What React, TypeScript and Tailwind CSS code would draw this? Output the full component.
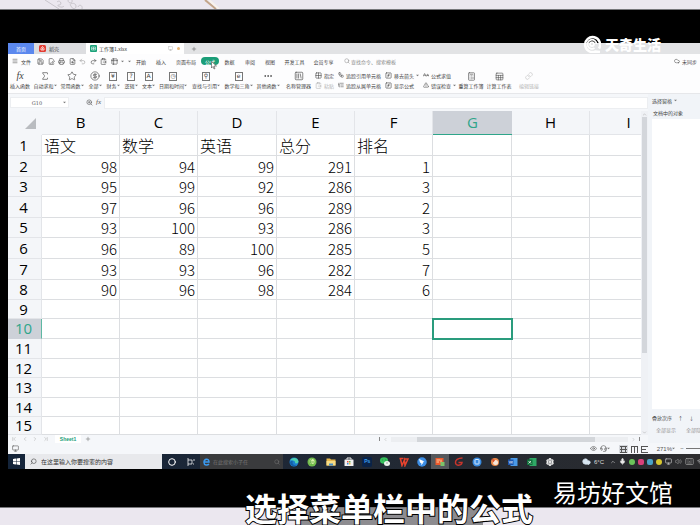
import React from 'react';
import {
  ALargeSmall, Calculator, ChevronDown, ChevronFirst, ChevronLast, ChevronLeft, ChevronRight, ChevronUp, Circle,
  CircleDollarSign, ClipboardPaste, Cloud, Ellipsis, Eye, FilePenLine, FileSearch, FunctionSquare, Grid2x2, Headset,
  Keyboard, Link, ListTree, Menu, Mic, Monitor, Plus, Printer, Redo2, Save, Search, Settings, Sheet, Sigma,
  SquareFunction, SquareLibrary, Star, Table2, TriangleAlert, Undo2, Volume2, Wifi, Workflow, ZoomIn,
} from 'lucide-react';

const columns = ['B', 'C', 'D', 'E', 'F', 'G', 'H', 'I'];
const columnWidths = [
  'min-w-[78px]', 'min-w-[78px]', 'min-w-[79px]', 'min-w-[78px]', 'min-w-[78px]', 'min-w-[79px]', 'min-w-[78px]', 'min-w-[78px]',
];

const rows: { h: string; cells?: (string | number)[] }[] = [
  { h: 'h-[21px]', cells: ['语文', '数学', '英语', '总分', '排名'] },
  { h: 'h-[21px]', cells: [98, 94, 99, 291, 1] },
  { h: 'h-[20px]', cells: [95, 99, 92, 286, 3] },
  { h: 'h-[21px]', cells: [97, 96, 96, 289, 2] },
  { h: 'h-[20px]', cells: [93, 100, 93, 286, 3] },
  { h: 'h-[21px]', cells: [96, 89, 100, 285, 5] },
  { h: 'h-[21px]', cells: [93, 93, 96, 282, 7] },
  { h: 'h-[20px]', cells: [90, 96, 98, 284, 6] },
  { h: 'h-[19px]' },
  { h: 'h-[20px]' },
  { h: 'h-[20px]' },
  { h: 'h-[19px]' },
  { h: 'h-[20px]' },
  { h: 'h-[19px]' },
  { h: 'h-[18px]' },
];

const menus = [
  { label: '开始', w: 'w-[20px]' },
  { label: '插入', w: 'w-[20px]' },
  { label: '页面布局', w: 'w-[30px]' },
  { label: '公式', w: 'w-[18px]', active: true },
  { label: '数据', w: 'w-[21px]' },
  { label: '审阅', w: 'w-[20px]' },
  { label: '视图', w: 'w-[20px]' },
  { label: '开发工具', w: 'w-[29px]' },
  { label: '会员专享', w: 'w-[29px]' },
];

const ribbon = [
  { label: '插入函数', w: 'w-[24px]', icon: <span className="font-['Liberation_Serif'] text-[10px] italic">fx</span> },
  { label: '自动求和', w: 'w-[26px]', icon: <Sigma size={10} strokeWidth={1.5} />, more: true },
  { label: '常用函数', w: 'w-[28px]', icon: <Star size={10} strokeWidth={1.5} />, more: true },
  { label: '全部', w: 'w-[18px]', icon: <CircleDollarSign size={10} strokeWidth={1.5} />, more: true },
  { label: '财务', w: 'w-[18px]', icon: <BoxIcon text="¥" />, more: true },
  { label: '逻辑', w: 'w-[18px]', icon: <BoxIcon text="?" />, more: true },
  { label: '文本', w: 'w-[17px]', icon: <BoxIcon text="A" />, more: true },
  { label: '日期和时间', w: 'w-[32px]', icon: <BoxIcon text="◷" />, more: true },
  { label: '查找与引用', w: 'w-[34px]', icon: <BoxIcon text="⚲" />, more: true },
  { label: '数学和三角', w: 'w-[31px]', icon: <BoxIcon text="e" />, more: true },
  { label: '其他函数', w: 'w-[28px]', icon: <Ellipsis size={10} strokeWidth={2} />, more: true },
];

function BoxIcon({ text }: { text: string }) {
  return (
    <span className="flex h-[9px] w-[8px] items-center justify-center border border-[#777] font-['DejaVu_Sans'] text-[6px]">
      {text}
    </span>
  );
}

function Caret() {
  return (
    <svg width="3" height="3" viewBox="0 0 6 6" className="shrink-0">
      <path d="M0 1.5h6L3 4.5z" fill="#777" />
    </svg>
  );
}

function RibbonButton({ label, w, icon, more, muted }: {
  label: string; w: string; icon: React.ReactNode; more?: boolean; muted?: boolean;
}) {
  return (
    <button className={`${w} ${muted ? 'text-[#b5b5b5]' : 'text-[#444]'} flex shrink-0 flex-col items-center gap-[2px]`}>
      <span className="flex h-[10px] items-center">{icon}</span>
      <span className="flex items-center whitespace-nowrap text-[5px]">
        {label}
        {more && <Caret />}
      </span>
    </button>
  );
}

function SmallButton({ label, icon, more, muted }: {
  label: string; icon: React.ReactNode; more?: boolean; muted?: boolean;
}) {
  return (
    <button className={`${muted ? 'text-[#b5b5b5]' : 'text-[#444]'} flex items-center gap-[2px] whitespace-nowrap text-[5px]`}>
      {icon}
      {label}
      {more && <Caret />}
    </button>
  );
}

function TabBar() {
  return (
    <div className="flex h-[11px] bg-[#e2e3e5] text-[5px]">
      <button className="w-[26px] bg-[#5b88ee] text-white">首页</button>
      <button className="flex w-[52px] items-center gap-[3px] bg-[#dcdde0] pl-[5px] text-[#444]">
        <svg width="7" height="7" viewBox="0 0 14 14">
          <rect width="14" height="14" rx="3" fill="#e33c31" />
          <path d="M4 10c-1-4 2-6 3-7 1 1 4 3 3 7H4zM7 5v4" fill="none" stroke="#fff" strokeWidth="1.5" />
        </svg>
        稻壳
      </button>
      <div className="flex w-[98px] items-center gap-[2px] bg-white px-[4px] text-[#333]">
        <svg width="7" height="7" viewBox="0 0 14 14">
          <rect width="14" height="14" rx="2" fill="#1ba27a" />
          <path d="M3 4h8v6H3zM3 7h8M7 4v6" fill="none" stroke="#fff" />
        </svg>
        <span className="flex-1">工作簿1.xlsx</span>
        <Monitor size={5} className="text-[#aaa]" />
        <span className="ml-[2px] size-[3px] rounded-full bg-[#e8b574]" />
      </div>
      <button className="w-[20px] text-[#555]" aria-label="新建">
        <Plus size={6} className="mx-auto" />
      </button>
    </div>
  );
}

function MenuRow() {
  return (
    <div className="flex h-[14px] items-center text-[5px] text-[#444]">
      <button className="ml-[4px] flex w-[25px] items-center gap-[3px]">
        <Menu size={6} />
        文件
      </button>
      <div className="flex w-[94px] items-center justify-between text-[#444]">
        <Save size={7} />
        <FilePenLine size={7} />
        <Printer size={7} />
        <FileSearch size={7} />
        <Undo2 size={7} className="text-[#999]" />
        <Redo2 size={7} />
        <ClipboardPaste size={7} />
        <Table2 size={7} />
        <Caret />
        <Caret />
      </div>
      <nav className="flex items-center">
        {menus.map((m) => (
          <button
            key={m.label}
            className={`${m.w} ${m.active ? 'relative rounded-full bg-[#1b9d78] text-white' : ''} h-[8px] shrink-0 whitespace-nowrap`}
          >
            {m.label}
            {m.active && (
              <svg width="6" height="9" viewBox="0 0 12 18" className="absolute top-[4px] left-[10px]">
                <path d="M1 1v13l3-3 2 5 2-1-2-5h5z" fill="#fff" stroke="#222" />
              </svg>
            )}
          </button>
        ))}
      </nav>
      <label className="ml-[6px] flex items-center gap-px text-[#888]">
        <Search size={6} />
        <input
          aria-label="查找命令"
          placeholder="查找命令、搜索模板"
          className="w-[60px] bg-transparent placeholder:text-[#888] placeholder:opacity-100"
        />
      </label>
      <button className="mr-[3px] ml-auto flex items-center gap-[2px]">
        <Cloud size={6} />
        未同步
      </button>
    </div>
  );
}

function Ribbon() {
  return (
    <div className="flex h-[26px] items-start border-b border-[#e6e7ea] pt-[3px]">
      {ribbon.map((item) => (
        <RibbonButton key={item.label} {...item} />
      ))}
      <RibbonButton label="名称管理器" w="w-[33px]" icon={<SquareLibrary size={10} strokeWidth={1.5} />} />
      <div className="grid grid-flow-col grid-rows-[8px_8px] gap-x-[4px] gap-y-[2px]">
        <SmallButton label="指定" icon={<Grid2x2 size={7} />} />
        <SmallButton label="粘贴" icon={<ClipboardPaste size={7} />} muted />
        <SmallButton label="追踪引用单元格" icon={<Workflow size={6} />} />
        <SmallButton label="追踪从属单元格" icon={<ListTree size={6} />} />
        <SmallButton label="移去箭头" icon={<SquareFunction size={7} />} more />
        <SmallButton label="显示公式" icon={<FunctionSquare size={7} />} />
        <SmallButton label="公式求值" icon={<ALargeSmall size={6} />} />
        <SmallButton label="错误检查" icon={<TriangleAlert size={6} />} more />
      </div>
      <div className="ml-px flex">
        <RibbonButton label="重算工作簿" w="w-[28px]" icon={<Calculator size={9} strokeWidth={1.5} />} />
        <RibbonButton label="计算工作表" w="w-[28px]" icon={<Sheet size={9} strokeWidth={1.5} />} />
        <RibbonButton label="编辑链接" w="w-[32px]" icon={<Link size={8} strokeWidth={1.5} />} muted />
      </div>
    </div>
  );
}

function FormulaBar() {
  return (
    <div className="flex h-[17px] items-center bg-[#f5f7fa] text-[#555]">
      <div className="ml-[2px] flex h-[11px] w-[59px] items-center border border-[#eceef1] bg-white pr-[2px]">
        <input
          aria-label="名称框"
          defaultValue="G10"
          className="w-0 flex-1 text-center font-['DejaVu_Serif'] text-[5px]"
        />
        <Caret />
      </div>
      <ZoomIn size={7} className="ml-[17px]" />
      <label htmlFor="formula" className="mx-[3px] font-['Liberation_Serif'] text-[7px] italic">
        fx
      </label>
      <input id="formula" className="h-[12px] min-w-0 flex-1 border border-[#eceef1] bg-white text-[6px]" />
    </div>
  );
}

function Grid() {
  return (
    <table className="w-max border-separate border-spacing-0 bg-white text-black">
      <thead>
        <tr className="h-[24px] bg-[#f4f6f9] font-['Open_Sans'] text-[15px]">
          <th className="min-w-[34px] p-0" aria-label="全选">
            <svg width="11" height="11" viewBox="0 0 11 11" className="mr-[6px] ml-auto">
              <path d="M11 0v11H0z" fill="#b9bcc0" />
            </svg>
          </th>
          {columns.map((c, i) => (
            <th
              key={c}
              className={`${columnWidths[i]} p-0 font-normal ${
                c === 'G'
                  ? 'border-b border-[#2fa58a] bg-[#cdd1d8] text-[#2fa58a]'
                  : 'border-r border-b border-[#e3e5e9]'
              }`}
            >
              {c}
            </th>
          ))}
        </tr>
      </thead>
      <tbody>
        {rows.map((row, r) => (
          <tr key={r} className={row.h}>
            <th
              className={`border-r border-b p-0 pr-[2px] text-center font-['Open_Sans'] text-[15px] font-normal ${
                r === 9
                  ? 'border-[#5eb8a3] border-b-[#cdd1d8] bg-[#cdd1d8] text-[#2fa58a]'
                  : 'border-[#e3e5e9] bg-[#f4f6f9]'
              }`}
            >
              {r + 1}
            </th>
            {columns.map((c, i) => {
              const value = row.cells?.[i];
              const selected = r === 9 && c === 'G';
              return (
                <td
                  key={c}
                  className={`border-r border-b border-[#dcdee1] p-0 font-light ${
                    typeof value === 'number' ? 'pr-[2px] text-right text-[15px]' : 'pl-[2px] text-[16px]'
                  } ${selected ? 'outline-2 -outline-offset-1 outline-[#2a9c7d]' : ''}`}
                >
                  {value}
                </td>
              );
            })}
          </tr>
        ))}
      </tbody>
    </table>
  );
}

function SheetTabs() {
  return (
    <div className="flex h-[8px] items-center bg-[#f5f7fa] text-[#aaa]">
      <div className="ml-[3px] flex w-[38px] justify-between">
        <ChevronFirst size={6} />
        <ChevronLeft size={6} />
        <ChevronRight size={6} />
        <ChevronLast size={6} />
      </div>
      <button className="ml-[6px] h-[8px] w-[26px] bg-white font-['Liberation_Sans'] text-[5px] font-bold text-[#1b9d78]">
        Sheet1
      </button>
      <Plus size={6} className="ml-[4px] text-[#666]" />
      <div className="ml-auto flex w-[42%] items-center gap-[3px]">
        <span className="h-[4px] w-px bg-[#888]" />
        <ChevronLeft size={5} />
        <div className="flex h-[5px] flex-1 bg-[#eceef1]">
          <div className="ml-[11%] w-[75%] bg-[#d3d6da]" />
        </div>
        <ChevronRight size={5} />
        <span className="mr-[8px] h-[4px] w-px bg-[#888]" />
      </div>
    </div>
  );
}

function SelectionPane() {
  return (
    <aside className="flex w-[52px] shrink-0 flex-col overflow-hidden bg-[#f1f4f8] pl-[4px] text-[5px] whitespace-nowrap text-[#444]">
      <button className="flex h-[12px] items-center gap-[2px]">
        选择窗格
        <Caret />
      </button>
      <h2 className="flex h-[13px] items-center pl-px">文档中的对象</h2>
      <div className="flex-1 bg-white" />
      <div className="flex h-[16px] items-center gap-[6px]">
        叠放次序
        <button aria-label="上移">↑</button>
        <button aria-label="下移">↓</button>
      </div>
      <div className="flex h-[18px] items-start gap-[10px] pt-[2px] pl-[4px] text-[#999]">
        <button>全部显示</button>
        <button>全部隐藏</button>
      </div>
    </aside>
  );
}

function StatusBar() {
  return (
    <div className="flex h-[11px] items-center overflow-hidden bg-[#f5f7fa] text-[#555]">
      <Monitor size={7} className="ml-[4px]" />
      <div className="ml-auto flex items-center">
        <Eye size={7} />
        <Headset size={7} className="ml-[3px]" />
        <Caret />
        <svg width="30" height="8" viewBox="0 0 30 8" className="ml-[9px]" fill="none" stroke="#555">
          <path d="M0 0h9v8H0z" fill="#d5d8dd" stroke="none" />
          <path d="M1 1.5h7M1 4.5h7M1 7.5h7M2.5 1v6M6.5 1v6" />
          <path d="M12 1.5h6M12.5 1v7M15.5 1v7M18.5 1v7" />
          <path d="M22 1.5h7M22 4.5h5M22 7.5h7M22.5 1v7" />
        </svg>
        <span className="ml-[8px] font-['Liberation_Sans'] text-[6px]">271%</span>
        <Caret />
        <button aria-label="缩小" className="ml-[3px] w-[8px] text-[6px]">−</button>
        <input
          type="range"
          aria-label="缩放"
          defaultValue="100"
          className="h-px w-[14px] appearance-none bg-[#777] [&::-webkit-slider-thumb]:appearance-none"
        />
      </div>
    </div>
  );
}

const taskIcons = [
  <svg key="edge" viewBox="0 0 20 20">
    <circle cx="10" cy="10" r="9" fill="#1b7fd0" />
    <path d="M2 7C5 0 18 0 19 9c0 4-6 5-7 3 2-4-6-7-10-5z" fill="#4fd0b0" />
    <path d="M8 9c-3 4 2 9 8 7-4 4-13 3-14-5 1-3 4-4 6-2z" fill="#1460a8" />
  </svg>,
  <svg key="browser" viewBox="0 0 20 20">
    <circle cx="10" cy="10" r="9" fill="#72bc4e" />
    <circle cx="10" cy="9" r="5" fill="#d9f0a8" />
    <path d="M6 10h8M10 5c-5 1-5 8 0 9" stroke="#4c9f3a" strokeWidth="1.5" fill="none" />
  </svg>,
  <svg key="folder" viewBox="0 0 20 20">
    <path d="M1 3h7l2 2h9v12H1z" fill="#e8b84c" />
    <path d="M1 8h18v9H1z" fill="#f8dc84" />
    <path d="M6 13h8v4H6z" fill="#4a90c8" />
  </svg>,
  <svg key="store" viewBox="0 0 20 20">
    <path d="M6 5V2h8v3" fill="none" stroke="#eee" strokeWidth="2" />
    <rect x="1" y="5" width="18" height="13" rx="1" fill="#f2f2f2" />
    <path d="M6 8h3v3H6z" fill="#e64c3c" />
    <path d="M10 8h3v3h-3z" fill="#5cb04a" />
    <path d="M6 12h3v3H6z" fill="#3a90d8" />
    <path d="M10 12h3v3h-3z" fill="#f0b840" />
  </svg>,
  <span key="ps" className="flex size-full items-center justify-center rounded-xs bg-[#0a2348] font-['Liberation_Sans'] text-[5px] font-bold text-[#3aa0f0]">
    Ps
  </span>,
  <svg key="wechat" viewBox="0 0 20 20">
    <ellipse cx="8" cy="7" rx="8" ry="6.5" fill="#35c05c" />
    <ellipse cx="14" cy="13" rx="6" ry="5" fill="#eef4ee" />
    <path d="M5 6h1M10 6h1M12 12h1M15 12h1" stroke="#333" strokeWidth="1.5" />
  </svg>,
  <svg key="wps" viewBox="0 0 20 20">
    <path d="M1 3h8M3 4l3 13 5-11 1 11 6-13h-8" fill="none" stroke="#e8432e" strokeWidth="3" />
  </svg>,
  <svg key="bird" viewBox="0 0 20 20">
    <circle cx="10" cy="10" r="9.5" fill="#3c8ee6" />
    <path d="M4 4l11 5-4 1 2 1-5 6 1-4-3-2z" fill="#fff" />
  </svg>,
  <svg key="recorder" viewBox="0 0 20 20">
    <rect x="1" y="2" width="16" height="14" fill="#ee5a2c" />
    <path d="M3 6h7M3 10h5M12 5v6" stroke="#ffd0a0" strokeWidth="2" />
    <rect x="11" y="10" width="8" height="8" fill="#7cc36a" />
  </svg>,
  <svg key="gaming" viewBox="0 0 20 20">
    <path d="M17 2C8 2 2 6 3 12c1 6 12 6 13-1H9" fill="none" stroke="#c8352c" strokeWidth="3" />
  </svg>,
  <svg key="notes" viewBox="0 0 20 20">
    <circle cx="10" cy="10" r="9" fill="#3a8be0" />
    <rect x="6" y="5" width="8" height="9" rx="1" fill="none" stroke="#d8ecff" strokeWidth="2" />
  </svg>,
  <svg key="palette" viewBox="0 0 20 20">
    <circle cx="10" cy="10" r="8" fill="#ec8b4c" />
    <circle cx="11" cy="11" r="5" fill="#f6e8dc" />
    <path d="M3 3l7 3-3 5z" fill="#d84f30" />
  </svg>,
  <svg key="word" viewBox="0 0 20 20">
    <rect x="5" y="2" width="14" height="16" fill="#4a9ae8" />
    <rect x="0" y="5" width="11" height="11" fill="#1a55b0" />
    <path d="M2 8l2 5 2-5 2 5 1-5" fill="none" stroke="#fff" />
  </svg>,
  <svg key="excel" viewBox="0 0 20 20">
    <rect x="5" y="2" width="14" height="16" fill="#2fa866" />
    <rect x="0" y="5" width="11" height="11" fill="#12703c" />
    <path d="M3 8l5 5M8 8l-5 5" fill="none" stroke="#fff" strokeWidth="1.5" />
  </svg>,
  <Settings key="settings" color="#eee" strokeWidth={4} className="size-[8px]" />,
];

function Taskbar() {
  return (
    <div className="flex h-[15px] items-center overflow-hidden bg-linear-to-r from-[#14243a] to-[#2c2c2e] text-white">
      <button aria-label="开始" className="w-[17px]">
        <svg width="7" height="7" viewBox="0 0 14 14" className="mx-auto">
          <path d="M0 2l6-1v6H0zM7 1l7-1v7H7zM0 8h6v5l-6-1zM7 8h7v6l-7-1z" fill="#fff" />
        </svg>
      </button>
      <label className="flex h-full w-[137px] items-center gap-[4px] bg-[#e8e9ec] pl-[5px] text-[#444]">
        <Search size={7} className="-scale-x-100" />
        <input
          aria-label="搜索"
          placeholder="在这里输入你要搜索的内容"
          className="min-w-0 flex-1 bg-transparent text-[6px] placeholder:text-[#333] placeholder:opacity-100"
        />
      </label>
      <div className="flex w-[38px] justify-around">
        <Circle size={8} strokeWidth={3} />
        <svg width="8" height="8" viewBox="0 0 16 16" fill="none" stroke="#fff" strokeWidth="1.5">
          <path d="M2 0v16M2 4h8v8H2M12 4h4M12 12h2" />
        </svg>
      </div>
      <div className="flex h-full w-[83px] items-center gap-[3px] bg-[#3a3b3d] px-[3px] text-[5px] text-[#777]">
        <svg width="7" height="8" viewBox="0 0 14 16">
          <path d="M3 8h9c0-8-10-7-10 1 0 6 7 6 10 3" fill="none" stroke="#3b9bf0" strokeWidth="3" />
        </svg>
        <span className="flex-1">在此搜索小子任</span>
        <Search size={6} />
      </div>
      <div className="ml-[2px] grid h-full w-[274px] shrink-0 grid-cols-15">
        {taskIcons.map((icon, i) => (
          <button
            key={i}
            aria-label={`应用 ${i + 1}`}
            className={`flex items-center justify-center ${i === 8 ? 'bg-[#55585c]' : ''}`}
          >
            <span className="flex size-[10px] items-center justify-center">{icon}</span>
          </button>
        ))}
      </div>
      <div className="ml-auto flex items-center text-[#ddd]">
        <Cloud size={9} fill="#d8e6f2" className="text-[#d8e6f2]" />
        <span className="ml-[3px] w-[16px] font-['Liberation_Sans'] text-[6px]">6°C</span>
        <div className="-mr-[4px] flex items-center gap-[3px]">
          <ChevronUp size={6} />
          <Mic size={7} fill="#eee" />
          <span className="size-[6px] rounded-full bg-[#6cc35a]" />
          <span className="size-[6px] rounded-xs bg-[#d8407a]" />
          <span className="size-[6px] rounded-xs bg-[#4aa3c8]" />
          <span className="size-[6px] rounded-full bg-[#d8c830]" />
          <Monitor size={7} />
          <Volume2 size={7} className="text-[#999]" />
          <Keyboard size={9} className="text-[#999]" />
          <Wifi size={7} />
        </div>
      </div>
    </div>
  );
}

export default function App() {
  return (
    <div className="relative flex min-h-screen flex-col overflow-hidden bg-[#ebe7ef] font-['Noto_Sans_CJK_SC',sans-serif] leading-none">
      <div className="flex h-[9px]">
        <svg width="240" height="9" viewBox="0 0 240 9">
          <path
            d="M45 0l14 9M57 2c3-3 6 3 2 3s3 4 5 1M68 0c0 4 5 4 4 0M71 6c-3-3 5-4 5 0s-4 3-5 0M78 7c1-3 5-2 4 2"
            fill="none"
            stroke="#c9c5cc"
          />
          <path d="M205 0l11 9" stroke="#c3a58a" strokeWidth="2" />
          <path d="M209 0l10 9" stroke="#f8f2ec" strokeWidth="2" />
        </svg>
      </div>
      <main className="border-y border-[#77777b] bg-black pt-[33px] pb-[38px] pl-[8px]">
        <div className="overflow-hidden bg-[#fdfdfe]">
          <TabBar />
          <MenuRow />
          <Ribbon />
          <div className="flex">
            <div className="min-w-0 flex-1">
              <FormulaBar />
              <div className="flex">
                <div className="min-w-0 flex-1 overflow-hidden">
                  <Grid />
                </div>
                <div className="flex w-[7px] shrink-0 flex-col items-center bg-[#eff1f5] pt-px text-[#999]">
                  <ChevronUp size={5} />
                  <div className="h-[236px] w-[5px] bg-[#d3d6db]" />
                  <ChevronDown size={5} className="mt-auto" />
                </div>
              </div>
              <SheetTabs />
            </div>
            <SelectionPane />
          </div>
          <StatusBar />
          <Taskbar />
        </div>
      </main>
      <div className="flex flex-1">
        <div className="ml-[43%] w-[26%] bg-[#8d8c90]" />
      </div>

      {/* channel mark over the screen */}
      <div className="absolute top-[35px] right-[39px] flex items-center gap-[4px] text-[14px] font-black text-white">
        <svg width="18" height="18" viewBox="0 0 36 36" fill="none" stroke="#fff">
          <path d="M32 27A15 15 0 1 0 25 33l9 1" strokeWidth="5" />
          <path d="M27 18a9 9 0 1 0-4 8" strokeWidth="3.5" />
          <circle cx="18" cy="18" r="4" strokeWidth="3.5" />
        </svg>
        天奇生活
      </div>
      <p className="absolute top-[480px] right-[27px] text-[24px] text-white">易坊好文馆</p>
      <p className="absolute top-[491px] left-[35%] text-[32px] font-bold whitespace-nowrap text-white [-webkit-text-stroke:2px_black] [paint-order:stroke_fill]">
        选择菜单栏中的公式
      </p>
    </div>
  );
}
